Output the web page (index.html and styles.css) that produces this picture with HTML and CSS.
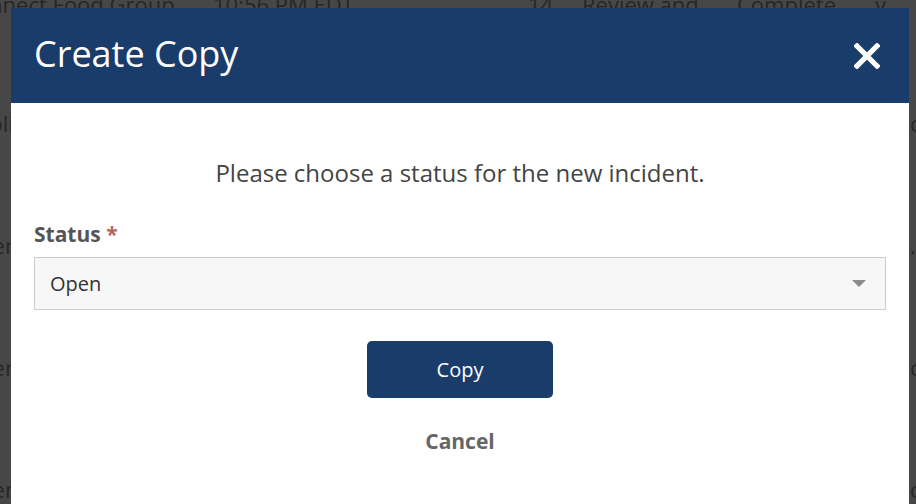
FILE: index.html
```html
<!DOCTYPE html>
<html lang="en">
<head>
<meta charset="utf-8">
<title>Create Copy</title>
<link rel="stylesheet" href="styles.css">
</head>
<body>
<div class="page">
  <div class="row row-first">
    <span class="c1">Connect Food Group</span>
    <span class="c2">10:56 PM EDT</span>
    <span class="c3">14</span>
    <span class="c4">Review and</span>
    <span class="c5">Complete</span>
    <span class="c6">y</span>
  </div>
  <div class="row"><span class="c1">Appli</span><span class="c7">c</span></div>
  <div class="row"><span class="c1">Open</span><span class="c7">.</span></div>
  <div class="row"><span class="c1">Open</span><span class="c7">c</span></div>
  <div class="row"><span class="c1">Open</span><span class="c7">c</span></div>
</div>
<div class="overlay"></div>
<div class="modal" role="dialog" aria-labelledby="modal-title">
  <div class="modal-header">
    <h1 id="modal-title" class="modal-title">Create Copy</h1>
    <button class="close" aria-label="Close">
      <svg width="26" height="26" viewBox="0 0 26 26"><path d="M3 3 L23 23 M23 3 L3 23" stroke="#fff" stroke-width="5.2" stroke-linecap="square" fill="none"/></svg>
    </button>
  </div>
  <div class="modal-body">
    <p class="prompt">Please choose a status for the new incident.</p>
    <label class="field-label">Status <span class="req">*</span></label>
    <div class="select">
      <span class="select-value">Open</span>
      <span class="caret"></span>
    </div>
    <div class="actions">
      <button class="btn-primary">Copy</button>
      <button class="btn-link">Cancel</button>
    </div>
  </div>
</div>
</body>
</html>
```
FILE: styles.css
```css
html, body {
  margin: 0;
  padding: 0;
  height: 100%;
  overflow: hidden;
}
body {
  background: #fff;
  font-family: "Open Sans", "Liberation Sans", sans-serif;
  color: #555;
}
.page {
  margin: -11px 0 0 -38px;
}
.row {
  display: grid;
  grid-template-columns: 251px 315px 54px 155px 138px 1fr;
  height: 121px;
  border-bottom: 1px solid #f2f2f2;
  font-size: 22px;
  line-height: 30px;
  color: #8a8a8a;
  white-space: nowrap;
}
.row-first {
  height: 72px;
}
.row:not(.row-first) {
  grid-template-columns: 948px 1fr;
  align-items: center;
}
.overlay {
  position: fixed;
  inset: 0;
  background: rgba(0, 0, 0, 0.72);
}
.modal {
  position: absolute;
  left: 11px;
  top: 8px;
  bottom: 0;
  width: 898px;
  background: #fff;
  overflow: hidden;
}
.modal-header {
  height: 95px;
  background: #1a3c6b;
  display: flex;
  align-items: center;
  justify-content: space-between;
  padding: 0 29px 0 23px;
}
.modal-title {
  margin: 0;
  font-size: 36px;
  font-weight: 400;
  color: #fff;
  line-height: 1;
  padding-bottom: 4px;
}
.close {
  background: none;
  border: 0;
  padding: 0;
  width: 26px;
  height: 26px;
  display: flex;
}
.modal-body {
  padding: 0 23px;
  display: flex;
  flex-direction: column;
}
.prompt {
  margin: 54px 0 0;
  text-align: center;
  font-size: 24px;
  line-height: 32px;
  color: #444;
}
.field-label {
  margin-top: 31px;
  font-size: 21px;
  line-height: 28px;
  font-weight: 700;
  color: #555;
}
.req {
  color: #b46463;
}
.select {
  margin-top: 9px;
  height: 53px;
  box-sizing: border-box;
  border: 1px solid #ccc;
  background: #f7f7f7;
  display: flex;
  align-items: center;
  justify-content: space-between;
  padding: 0 19px 0 15px;
}
.select-value {
  font-size: 20px;
  color: #333;
}
.caret {
  width: 0;
  height: 0;
  border-left: 7px solid transparent;
  border-right: 7px solid transparent;
  border-top: 7px solid #8c8c8c;
}
.actions {
  display: flex;
  flex-direction: column;
  align-items: center;
  margin-top: 31px;
}
.btn-primary {
  width: 186px;
  height: 57px;
  border: 0;
  border-radius: 5px;
  background: #1a3c6b;
  color: #fff;
  font-family: inherit;
  font-size: 20px;
  font-weight: 400;
}
.btn-link {
  margin-top: 29px;
  background: none;
  border: 0;
  padding: 0;
  font-family: inherit;
  font-size: 21px;
  line-height: 28px;
  font-weight: 700;
  color: #666;
}
```
